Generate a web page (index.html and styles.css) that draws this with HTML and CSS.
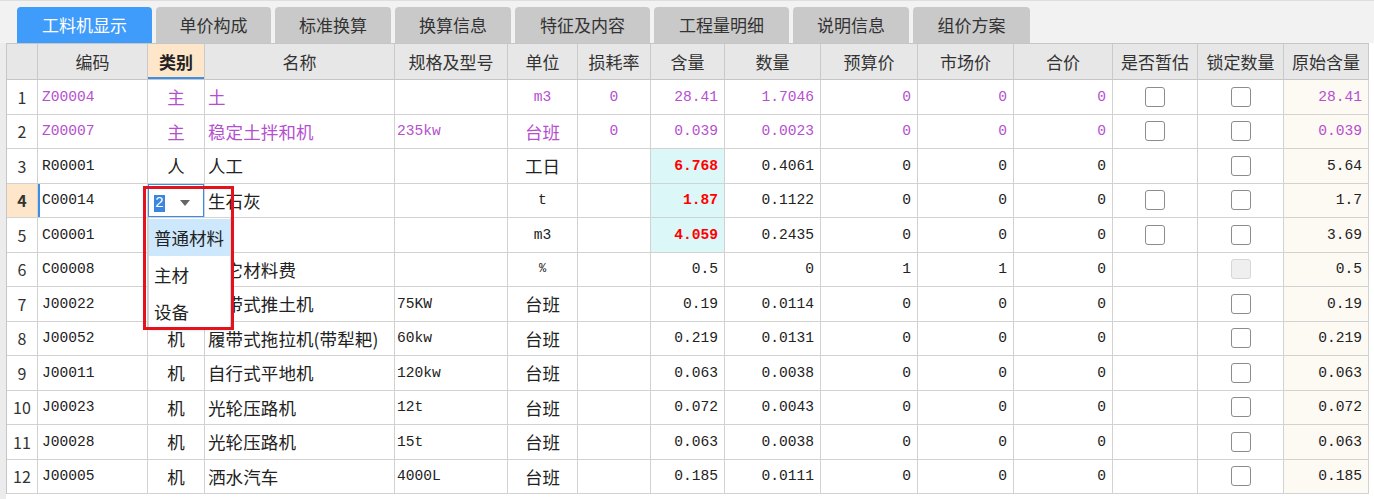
FILE: index.html
```html
<!DOCTYPE html>
<html lang="zh">
<head>
<meta charset="utf-8">
<title>工料机显示</title>
<link rel="stylesheet" href="styles.css">
</head>
<body>
<div class="page">
  <div class="tabs">
    <div class="tab active w135">工料机显示</div>
    <div class="tab w115">单价构成</div>
    <div class="tab w116">标准换算</div>
    <div class="tab w116">换算信息</div>
    <div class="tab w135">特征及内容</div>
    <div class="tab w135">工程量明细</div>
    <div class="tab w116">说明信息</div>
    <div class="tab w117">组价方案</div>
  </div>
  <div class="gridwrap">
    <table class="grid">
      <colgroup>
        <col class="c31"><col class="c110"><col class="c57"><col class="c190"><col class="c113"><col class="c70"><col class="c73"><col class="c74"><col class="c96"><col class="c97"><col class="c96"><col class="c99"><col class="c85"><col class="c86"><col class="c85">
      </colgroup>
      <thead>
        <tr>
          <th></th><th>编码</th><th class="sel">类别</th><th>名称</th><th>规格及型号</th><th>单位</th><th>损耗率</th><th>含量</th><th>数量</th><th>预算价</th><th>市场价</th><th>合价</th><th>是否暂估</th><th>锁定数量</th><th>原始含量</th>
        </tr>
      </thead>
      <tbody>
        <tr class="p">
          <td class="rn">1</td><td class="code">Z00004</td><td class="cat">主</td><td class="name">土</td><td class="spec"></td><td class="unit mono">m3</td><td class="loss">0</td><td class="n">28.41</td><td class="n">1.7046</td><td class="n">0</td><td class="n">0</td><td class="n">0</td><td class="cb"><span class="box"></span></td><td class="cb"><span class="box"></span></td><td class="n orig">28.41</td>
        </tr>
        <tr class="p">
          <td class="rn">2</td><td class="code">Z00007</td><td class="cat">主</td><td class="name">稳定土拌和机</td><td class="spec">235kw</td><td class="unit">台班</td><td class="loss">0</td><td class="n">0.039</td><td class="n">0.0023</td><td class="n">0</td><td class="n">0</td><td class="n">0</td><td class="cb"><span class="box"></span></td><td class="cb"><span class="box"></span></td><td class="n orig">0.039</td>
        </tr>
        <tr>
          <td class="rn">3</td><td class="code">R00001</td><td class="cat">人</td><td class="name">人工</td><td class="spec"></td><td class="unit">工日</td><td class="loss"></td><td class="n hl">6.768</td><td class="n">0.4061</td><td class="n">0</td><td class="n">0</td><td class="n">0</td><td class="cb"></td><td class="cb"><span class="box"></span></td><td class="n orig">5.64</td>
        </tr>
        <tr class="cur">
          <td class="rn">4</td><td class="code">C00014</td><td class="cat edit"><span class="editval">2</span><span class="arrow"></span></td><td class="name">生石灰</td><td class="spec"></td><td class="unit mono">t</td><td class="loss"></td><td class="n hl">1.87</td><td class="n">0.1122</td><td class="n">0</td><td class="n">0</td><td class="n">0</td><td class="cb"><span class="box"></span></td><td class="cb"><span class="box"></span></td><td class="n orig">1.7</td>
        </tr>
        <tr>
          <td class="rn">5</td><td class="code">C00001</td><td class="cat"></td><td class="name"></td><td class="spec"></td><td class="unit mono">m3</td><td class="loss"></td><td class="n hl">4.059</td><td class="n">0.2435</td><td class="n">0</td><td class="n">0</td><td class="n">0</td><td class="cb"><span class="box"></span></td><td class="cb"><span class="box"></span></td><td class="n orig">3.69</td>
        </tr>
        <tr>
          <td class="rn">6</td><td class="code">C00008</td><td class="cat"></td><td class="name">其它材料费</td><td class="spec"></td><td class="unit mono small">%</td><td class="loss"></td><td class="n">0.5</td><td class="n">0</td><td class="n">1</td><td class="n">1</td><td class="n">0</td><td class="cb"></td><td class="cb"><span class="box dis"></span></td><td class="n orig">0.5</td>
        </tr>
        <tr>
          <td class="rn">7</td><td class="code">J00022</td><td class="cat"></td><td class="name">履带式推土机</td><td class="spec">75KW</td><td class="unit">台班</td><td class="loss"></td><td class="n">0.19</td><td class="n">0.0114</td><td class="n">0</td><td class="n">0</td><td class="n">0</td><td class="cb"></td><td class="cb"><span class="box"></span></td><td class="n orig">0.19</td>
        </tr>
        <tr>
          <td class="rn">8</td><td class="code">J00052</td><td class="cat">机</td><td class="name">履带式拖拉机(带犁耙)</td><td class="spec">60kw</td><td class="unit">台班</td><td class="loss"></td><td class="n">0.219</td><td class="n">0.0131</td><td class="n">0</td><td class="n">0</td><td class="n">0</td><td class="cb"></td><td class="cb"><span class="box"></span></td><td class="n orig">0.219</td>
        </tr>
        <tr>
          <td class="rn">9</td><td class="code">J00011</td><td class="cat">机</td><td class="name">自行式平地机</td><td class="spec">120kw</td><td class="unit">台班</td><td class="loss"></td><td class="n">0.063</td><td class="n">0.0038</td><td class="n">0</td><td class="n">0</td><td class="n">0</td><td class="cb"></td><td class="cb"><span class="box"></span></td><td class="n orig">0.063</td>
        </tr>
        <tr>
          <td class="rn">10</td><td class="code">J00023</td><td class="cat">机</td><td class="name">光轮压路机</td><td class="spec">12t</td><td class="unit">台班</td><td class="loss"></td><td class="n">0.072</td><td class="n">0.0043</td><td class="n">0</td><td class="n">0</td><td class="n">0</td><td class="cb"></td><td class="cb"><span class="box"></span></td><td class="n orig">0.072</td>
        </tr>
        <tr>
          <td class="rn">11</td><td class="code">J00028</td><td class="cat">机</td><td class="name">光轮压路机</td><td class="spec">15t</td><td class="unit">台班</td><td class="loss"></td><td class="n">0.063</td><td class="n">0.0038</td><td class="n">0</td><td class="n">0</td><td class="n">0</td><td class="cb"></td><td class="cb"><span class="box"></span></td><td class="n orig">0.063</td>
        </tr>
        <tr>
          <td class="rn">12</td><td class="code">J00005</td><td class="cat">机</td><td class="name">洒水汽车</td><td class="spec">4000L</td><td class="unit">台班</td><td class="loss"></td><td class="n">0.185</td><td class="n">0.0111</td><td class="n">0</td><td class="n">0</td><td class="n">0</td><td class="cb"></td><td class="cb"><span class="box"></span></td><td class="n orig">0.185</td>
        </tr>
      </tbody>
    </table>
  </div>
  <div class="dropdown">
    <div class="opt on">普通材料</div>
    <div class="opt">主材</div>
    <div class="opt">设备</div>
  </div>
  <div class="redbox"></div>
</div>
</body>
</html>
```
FILE: styles.css
```css
* { box-sizing: border-box; }
html, body { margin: 0; padding: 0; }
body {
  background: #f2f2f2;
  font-family: "Noto Sans CJK SC", "Noto Sans", sans-serif;
  color: #222;
}
.page {
  position: relative;
  width: 1374px;
  height: 499px;
  overflow: hidden;
  border-top: 1px solid #dedede;
}
.tabs {
  display: flex;
  gap: 4px;
  padding: 6px 0 0 17px;
  height: 42px;
}
.tab {
  height: 36px;
  background: #c9c9c9;
  border-radius: 4px 4px 0 0;
  color: #333;
  font-size: 17px;
  line-height: 36px;
  text-align: center;
}
.tab.active { background: #3f9cfb; color: #fff; }
.w135 { width: 135px; }
.w115 { width: 115px; }
.w116 { width: 116px; }
.w117 { width: 117px; }

.c31 { width: 31px; }
.c110 { width: 110px; }
.c57 { width: 57px; }
.c190 { width: 190px; }
.c113 { width: 113px; }
.c70 { width: 70px; }
.c73 { width: 73px; }
.c74 { width: 74px; }
.c96 { width: 96px; }
.c97 { width: 97px; }
.c99 { width: 99px; }
.c85 { width: 85px; }
.c86 { width: 86px; }

.gridwrap {
  padding-left: 6px;
  background: linear-gradient(to right, #ececec 6px, #fff 6px);
  height: 456px;
}
.grid {
  table-layout: fixed;
  width: 1362px;
  border-collapse: separate;
  border-spacing: 0;
  border-top: 1px solid #c6c6c6;
  border-left: 1px solid #c6c6c6;
  background: #fff;
}
.grid th, .grid td {
  border-right: 1px solid #d2d2d2;
  border-bottom: 1px solid #d2d2d2;
  padding: 0;
  white-space: nowrap;
  overflow: hidden;
}
.grid thead tr { height: 36px; }
.grid th {
  background: #e7e7e7;
  font-weight: normal;
  font-size: 17px;
  color: #333;
  text-align: center;
  border-right-color: #cacaca;
  border-bottom-color: #c6c6c6;
}
.grid th.sel {
  background: #fde6c9;
  font-weight: bold;
  color: #222;
  box-shadow: inset 0 -2px 0 #3b8fe6;
}
.grid tbody tr { height: 34.5px; }
.grid td { font-size: 17.5px; }

.rn {
  text-align: center;
  font-size: 16px !important;
  color: #333;
}
.cur .rn { background: #fde6c9; font-weight: bold; }
.cur .code { box-shadow: inset 2px 0 0 #3b8fe6; }

.code, .spec, .n, .loss, .mono, .editval {
  font-family: "Liberation Mono", "DejaVu Sans Mono", monospace;
}
.code { padding-left: 4px !important; font-size: 14.6px !important; }
.spec { padding-left: 2px !important; font-size: 14.6px !important; }
.name { padding-left: 3px !important; letter-spacing: 0.1px; }
.cat { text-align: center; }
.unit { text-align: center; }
.unit.mono { font-size: 14.6px !important; }
.unit.small { font-size: 12px !important; }
.loss { text-align: center; font-size: 14.6px !important; }
.n { text-align: right; padding-right: 6px !important; font-size: 14.6px !important; }
.orig { background: #fdf9f3; }
.hl { background: #dcf7f7; color: #f00; font-weight: bold; }
.p td:not(.rn) { color: #b54fcf; }

.cb { text-align: center; line-height: 0; }
.box {
  display: inline-block;
  width: 20px;
  height: 20px;
  border: 1px solid #8c8c8c;
  border-radius: 3px;
  background: #fff;
  vertical-align: middle;
}
.box.dis { background: #efefef; border-color: #d6d6d6; }

.edit {
  text-align: left;
  box-shadow: inset 0 0 0 1px #3b8fe6;
  padding-left: 6px !important;
}
.editval {
  display: inline-block;
  font-size: 14.6px;
  background: #3a86e0;
  color: #fff;
  line-height: 17px;
  padding: 0 1px;
  vertical-align: middle;
}
.arrow {
  display: inline-block;
  width: 0;
  height: 0;
  border-left: 5px solid transparent;
  border-right: 5px solid transparent;
  border-top: 6px solid #666;
  margin-left: 15px;
  vertical-align: middle;
}

.dropdown {
  position: absolute;
  left: 148px;
  top: 216px;
  width: 83px;
  height: 111px;
  background: #fff;
  border: 1px solid #d4d4d4;
  box-shadow: 1px 2px 3px rgba(0,0,0,0.15);
  padding-top: 1px;
}
.opt {
  height: 37px;
  line-height: 37px;
  padding-left: 5px;
  font-size: 17.5px;
  color: #222;
}
.opt.on { background: #cde8fd; }
.redbox {
  position: absolute;
  left: 143px;
  top: 185px;
  width: 91px;
  height: 144px;
  border: 3px solid #e3121c;
}
```
